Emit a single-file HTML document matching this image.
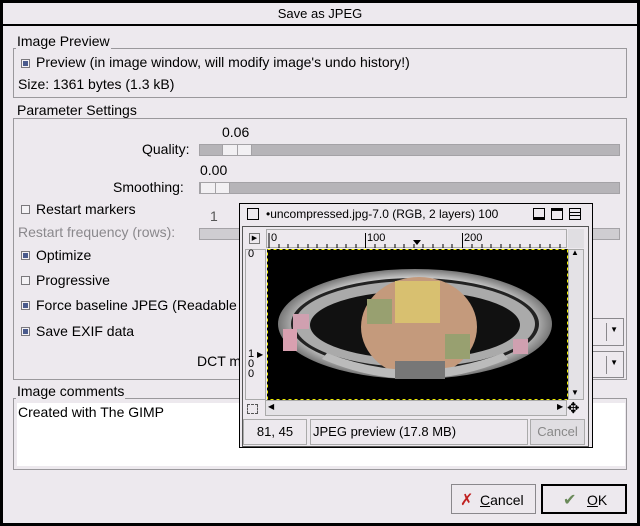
<!DOCTYPE html>
<html><head><meta charset="utf-8"><style>
*{margin:0;padding:0;box-sizing:border-box}
body{width:640px;height:526px;background:#000;font-family:"Liberation Sans","DejaVu Sans",sans-serif;font-size:14px;color:#000;position:relative;overflow:hidden}
.a{position:absolute;white-space:nowrap}
.win{position:absolute;left:3px;top:3px;width:634px;height:520px;background:#ede9ee}
.frame{position:absolute;border:1px solid #9a989c}
.lab{position:absolute;background:#ede9ee;padding:0 1px;line-height:16px}
.cb{position:absolute;width:9px;height:9px;border:1px solid #7a787c;background:#f4f2f5}
.cb.on::after{content:"";position:absolute;left:1px;top:1px;width:5px;height:5px;background:#4a5a8c}
.sl{position:absolute;height:12px;background:#b6b4b8;border:1px solid #a4a2a6}
.thumb{position:absolute;top:0;height:10px;background:linear-gradient(#a4a2a6,#a4a2a6) 50% 0/1px 100% no-repeat,#f2f0f3;border-left:1px solid #a4a2a6;border-right:1px solid #a4a2a6}
.btn{position:absolute;border:1px solid #8a888c;background:#ede9ee}
</style></head><body>
<div class="win">
<div class="a" style="left:0;top:0;width:634px;height:21px;text-align:center;line-height:21px;font-size:13px">Save as JPEG</div>
<div class="a" style="left:0;top:21px;width:634px;height:2px;background:#000"></div>

<div class="frame" style="left:10px;top:45px;width:614px;height:50px"></div>
<div class="lab" style="left:13px;top:30px">Image Preview</div>
<div class="cb on" style="left:18px;top:56px"></div>
<div class="a" style="left:33px;top:51px">Preview (in image window, will modify image's undo history!)</div>
<div class="a" style="left:15px;top:73px">Size: 1361 bytes (1.3 kB)</div>

<div class="frame" style="left:10px;top:115px;width:614px;height:262px"></div>
<div class="lab" style="left:13px;top:99px">Parameter Settings</div>
<div class="a" style="left:219px;top:121px">0.06</div>
<div class="a" style="left:139px;top:138px">Quality:</div>
<div class="sl" style="left:196px;top:141px;width:421px"><div class="thumb" style="left:22px;width:30px"></div></div>
<div class="a" style="left:197px;top:159px">0.00</div>
<div class="a" style="left:110px;top:176px">Smoothing:</div>
<div class="sl" style="left:196px;top:179px;width:421px"><div class="thumb" style="left:0;width:30px"></div></div>
<div class="cb" style="left:18px;top:202px"></div>
<div class="a" style="left:33px;top:198px">Restart markers</div>
<div class="a" style="left:207px;top:205px;color:#555">1</div>
<div class="a" style="left:15px;top:221px;color:#8a888c">Restart frequency (rows):</div>
<div class="sl" style="left:196px;top:225px;width:421px;background:#cfcdd1"></div>
<div class="cb on" style="left:18px;top:248px"></div>
<div class="a" style="left:33px;top:244px">Optimize</div>
<div class="cb" style="left:18px;top:273px"></div>
<div class="a" style="left:33px;top:269px">Progressive</div>
<div class="cb on" style="left:18px;top:298px"></div>
<div class="a" style="left:33px;top:294px">Force baseline JPEG (Readable by all decoders)</div>
<div class="cb on" style="left:18px;top:324px"></div>
<div class="a" style="left:33px;top:320px">Save EXIF data</div>
<div class="a" style="left:194px;top:350px">DCT method:</div>
<div class="btn" style="left:560px;top:315px;width:61px;height:28px"><div class="a" style="right:16px;top:4px;width:1px;height:18px;background:#8a888c"></div><div class="a" style="right:5px;top:6px;font-size:8px">▼</div></div>
<div class="btn" style="left:560px;top:348px;width:61px;height:27px"><div class="a" style="right:16px;top:4px;width:1px;height:18px;background:#8a888c"></div><div class="a" style="right:5px;top:6px;font-size:8px">▼</div></div>

<div class="frame" style="left:10px;top:395px;width:614px;height:72px"></div>
<div class="lab" style="left:13px;top:380px">Image comments</div>
<div class="a" style="left:14px;top:400px;width:608px;height:63px;background:#fff"></div>
<div class="a" style="left:15px;top:401px">Created with The GIMP</div>

<div class="btn" style="left:448px;top:481px;width:85px;height:30px"><span class="a" style="left:8px;top:5px;color:#c02020;font-size:16px;font-weight:bold">✗</span><span class="a" style="left:28px;top:7px"><u>C</u>ancel</span></div>
<div class="btn" style="left:538px;top:481px;width:86px;height:30px;border:2px solid #000"><span class="a" style="left:20px;top:4px;color:#6a8a5a;font-size:16px">✔</span><span class="a" style="left:44px;top:6px"><u>O</u>K</span></div>
</div>

<!-- popup -->
<div class="a" style="left:239px;top:203px;width:354px;height:245px;background:#000"></div>
<div class="a" style="left:240px;top:204px;width:352px;height:243px;background:#ede9ee"></div>
<div class="a" style="left:247px;top:208px;width:12px;height:12px;border:1px solid #000"></div>
<div class="a" style="left:266px;top:207px;font-size:12px">•uncompressed.jpg-7.0 (RGB, 2 layers) 100</div>
<div class="a" style="left:533px;top:208px;width:12px;height:12px;border:1px solid #000;border-bottom-width:3px"></div>
<div class="a" style="left:551px;top:208px;width:12px;height:12px;border:1px solid #000;border-top-width:3px"></div>
<div class="a" style="left:569px;top:208px;width:12px;height:12px;border:1px solid #000;background:linear-gradient(#000,#000) 0 3px/100% 1px no-repeat,linear-gradient(#000,#000) 0 6px/100% 1px no-repeat"></div>
<div class="a" style="left:242px;top:226px;width:347px;height:221px;border:1px solid #555"></div>
<div class="a" style="left:249px;top:233px;width:11px;height:11px;border:1px solid #777;font-size:7px;text-align:center;line-height:9px">▶</div>
<div class="a" style="left:266px;top:229px;width:301px;height:19px;border:1px solid #aaa;background:#ede9ee"></div>
<svg class="a" style="left:266px;top:229px" width="301" height="19">
<g stroke="#000" stroke-width="1">
<line x1="3" y1="4" x2="3" y2="19"/><line x1="99.5" y1="4" x2="99.5" y2="19"/><line x1="196.5" y1="4" x2="196.5" y2="19"/>
<path d="M13 15v4M22 15v4M32 15v4M42 15v4M51 15v4M61 15v4M71 15v4M80 15v4M90 15v4M109 15v4M119 15v4M129 15v4M138 15v4M148 15v4M157 15v4M167 15v4M177 15v4M186 15v4M206 15v4M216 15v4M225 15v4M235 15v4M244 15v4M254 15v4M264 15v4M274 15v4M284 15v4M294 15v4"/></g>
<path d="M147 11h8l-4 5z" fill="#000"/>
<text x="5" y="12" font-size="11" font-family="Liberation Sans">0</text><text x="101" y="12" font-size="11" font-family="Liberation Sans">100</text><text x="198" y="12" font-size="11" font-family="Liberation Sans">200</text></svg>
<div class="a" style="left:245px;top:249px;width:21px;height:151px;border:1px solid #aaa"></div>
<div class="a" style="left:248px;top:249px;font-size:11px;line-height:11px">0</div>
<div class="a" style="left:248px;top:349px;font-size:11px;line-height:10px">1<br>0<br>0</div>
<div class="a" style="left:257px;top:350px;font-size:8px">▶</div>
<svg class="a" style="left:267px;top:249px" width="301" height="151">
<defs><radialGradient id="ring" cx="50%" cy="50%" r="50%"><stop offset="80%" stop-color="#ddd"/><stop offset="100%" stop-color="#777"/></radialGradient></defs>
<rect width="301" height="151" fill="#000"/>
<rect x="0.5" y="0.5" width="300" height="150" fill="none" stroke="#ee0" stroke-dasharray="3 3"/>
<ellipse cx="148" cy="75" rx="137" ry="55" fill="url(#ring)"/>
<ellipse cx="148" cy="75" rx="124" ry="46" fill="#222"/>
<ellipse cx="148" cy="75" rx="120" ry="43" fill="#aaa"/>
<ellipse cx="148" cy="76" rx="105" ry="34" fill="#111"/>
<ellipse cx="152" cy="78" rx="58" ry="50" fill="#c49a7c"/>
<rect x="128" y="32" width="45" height="42" fill="#d8c070"/>
<rect x="100" y="50" width="25" height="25" fill="#98a070"/>
<rect x="178" y="85" width="25" height="25" fill="#98a070"/>
<path d="M55 110 Q148 150 241 110 L236 104 Q148 138 60 104z" fill="#bbb"/>
<rect x="16" y="80" width="14" height="22" fill="#d8a0b0"/>
<rect x="26" y="65" width="16" height="15" fill="#d0a0b0"/>
<rect x="246" y="90" width="15" height="15" fill="#d0a0b0"/>
<rect x="128" y="112" width="50" height="18" fill="#777"/>
</svg>
<div class="a" style="left:568px;top:249px;width:16px;height:151px;border:1px solid #aaa;background:#e4e2e6"></div>
<div class="a" style="left:571px;top:248px;font-size:8px">▲</div>
<div class="a" style="left:571px;top:388px;font-size:8px">▼</div>
<div class="a" style="left:568px;top:229px;width:16px;height:19px;background:#e0dee2"></div>
<div class="a" style="left:247px;top:404px;width:11px;height:10px;border:1px dashed #555"></div>
<div class="a" style="left:265px;top:400px;width:302px;height:16px;border:1px solid #aaa;background:#e4e2e6"></div>
<div class="a" style="left:268px;top:402px;font-size:8px">◀</div>
<div class="a" style="left:557px;top:402px;font-size:8px">▶</div>
<div class="a" style="left:567px;top:399px;font-size:15px">✥</div>
<div class="a" style="left:243px;top:419px;width:64px;height:26px;border:1px solid #aaa;text-align:center;line-height:24px;font-size:13px">81, 45</div>
<div class="a" style="left:310px;top:419px;width:218px;height:26px;border:1px solid #aaa;line-height:24px;font-size:13px;padding-left:2px">JPEG preview (17.8 MB)</div>
<div class="a" style="left:530px;top:419px;width:55px;height:26px;border:1px solid #aaa;background:#e0dee2;line-height:24px;font-size:13px;color:#888;text-align:center">Cancel</div>
</body></html>
